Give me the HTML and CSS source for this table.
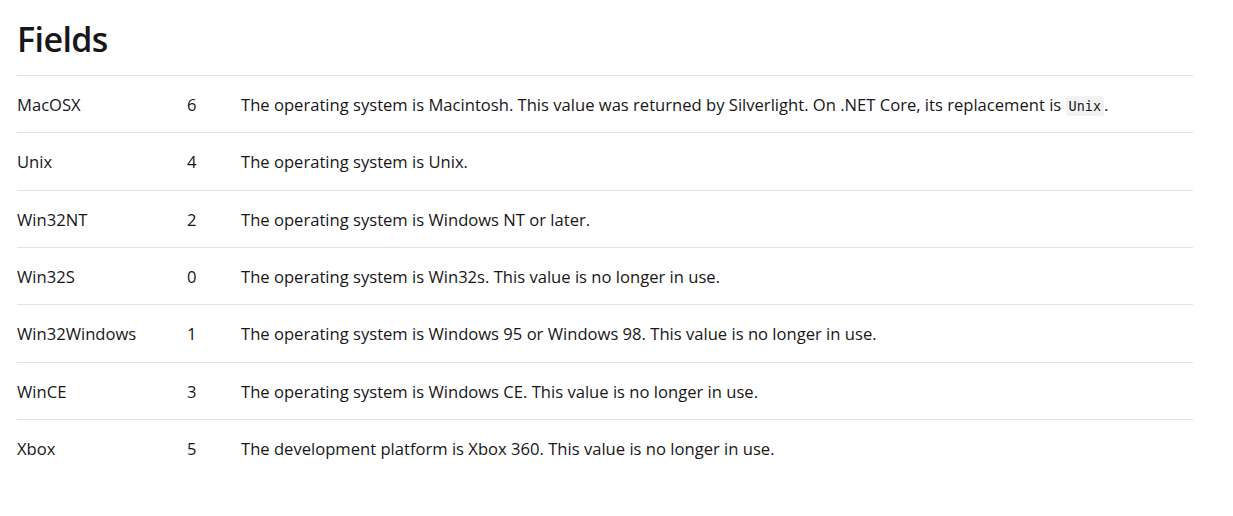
FILE: index.html
```html
<!DOCTYPE html>
<html lang="en">
<head>
<meta charset="utf-8">
<title>Fields</title>
<link rel="stylesheet" href="styles.css">
</head>
<body>
<main class="page">
  <h2 class="title">Fields</h2>
  <table class="fields">
    <tbody>
      <tr><td class="name">MacOSX</td><td class="val">6</td><td class="desc">The operating system is Macintosh. This value was returned by Silverlight. On .NET Core, its replacement is <code>Unix</code>.</td></tr>
      <tr><td class="name">Unix</td><td class="val">4</td><td class="desc">The operating system is Unix.</td></tr>
      <tr><td class="name">Win32NT</td><td class="val">2</td><td class="desc">The operating system is Windows NT or later.</td></tr>
      <tr><td class="name">Win32S</td><td class="val">0</td><td class="desc">The operating system is Win32s. This value is no longer in use.</td></tr>
      <tr><td class="name">Win32Windows</td><td class="val">1</td><td class="desc">The operating system is Windows 95 or Windows 98. This value is no longer in use.</td></tr>
      <tr><td class="name">WinCE</td><td class="val">3</td><td class="desc">The operating system is Windows CE. This value is no longer in use.</td></tr>
      <tr><td class="name">Xbox</td><td class="val">5</td><td class="desc">The development platform is Xbox 360. This value is no longer in use.</td></tr>
    </tbody>
  </table>
</main>
</body>
</html>
```
FILE: styles.css
```css
html, body {
  margin: 0;
  padding: 0;
  background: #ffffff;
}
body {
  font-family: "Open Sans", "Noto Sans", "Liberation Sans", sans-serif;
  color: #171717;
}
.page {
  width: 1176px;
  padding: 18px 0 0 17px;
}
.title {
  margin: 0 0 15px 0;
  font-size: 34px;
  font-weight: 600;
  line-height: 42px;
  letter-spacing: -0.6px;
}
.fields {
  width: 100%;
  border-collapse: collapse;
  font-size: 16.6px;
}
.fields td {
  border-top: 1px solid #e3e3e3;
  height: 54.33px;
  padding: 2px 0 0 0;
  vertical-align: middle;
  line-height: 22px;
}
.name {
  width: 170px;
}
.val {
  width: 54px;
}
code {
  font-family: "DejaVu Sans Mono", "Liberation Mono", monospace;
  font-size: 13.5px;
  background: #f2f2f2;
  padding: 2px 3px;
  border-radius: 3px;
}
```
